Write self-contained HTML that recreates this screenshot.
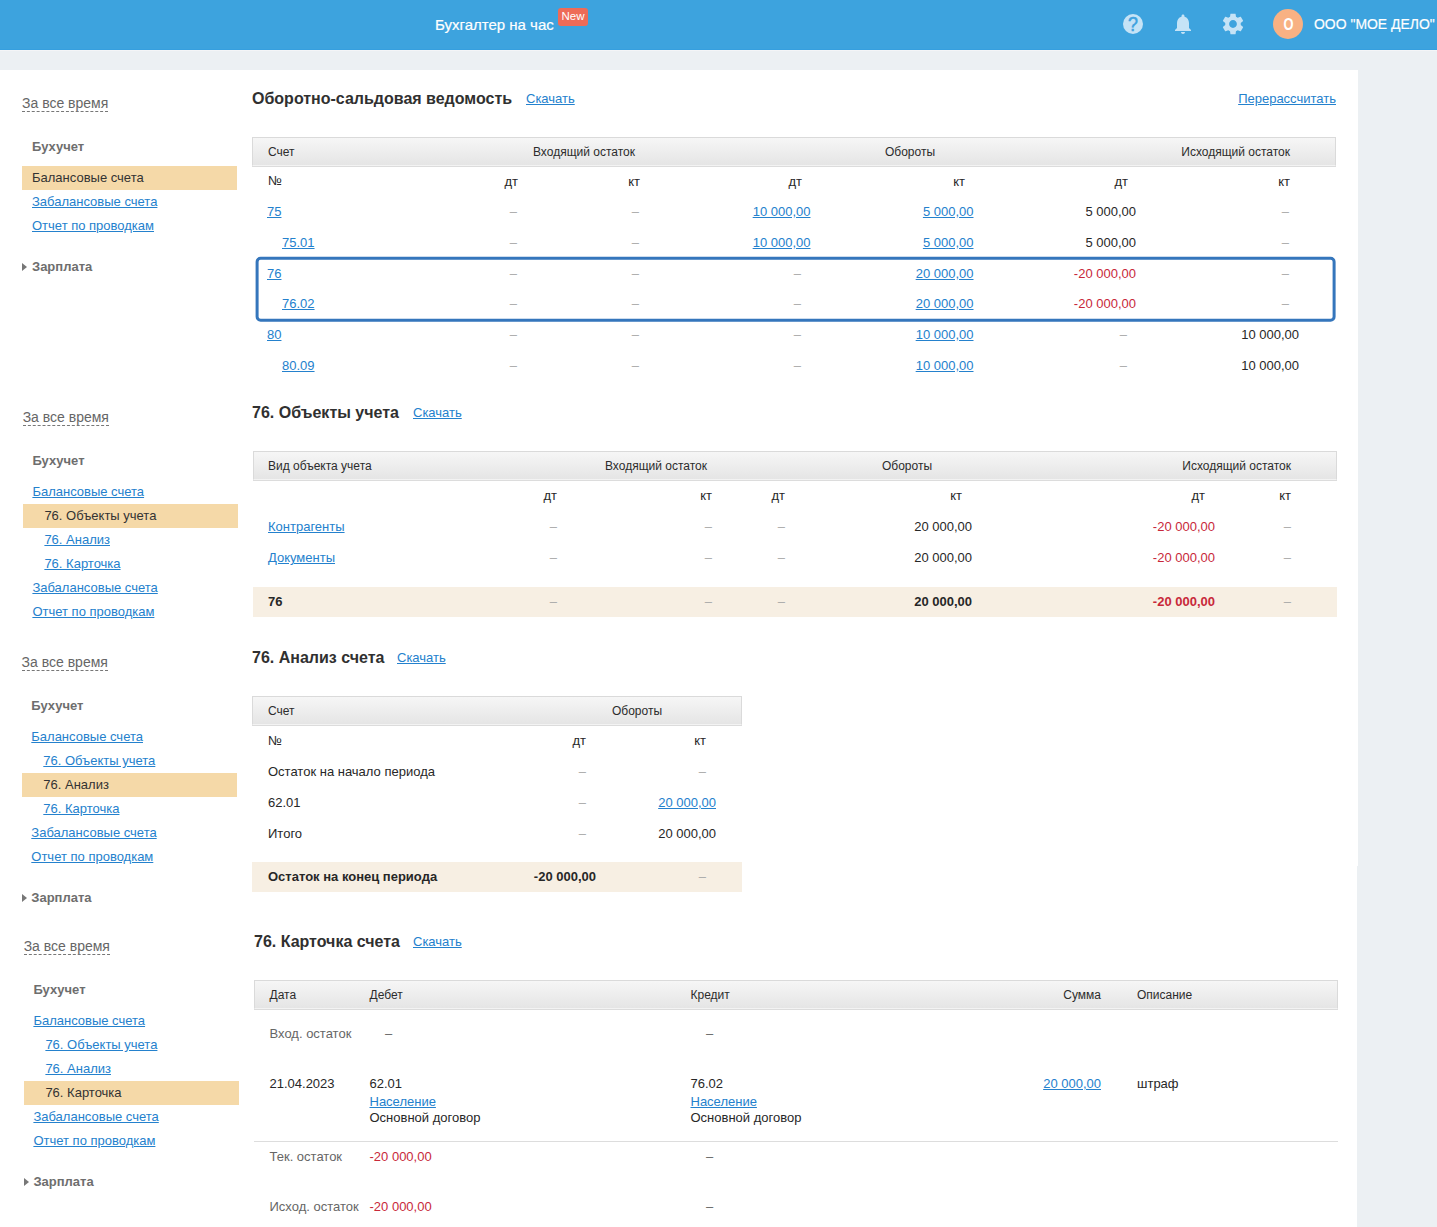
<!DOCTYPE html>
<html lang="ru"><head><meta charset="utf-8"><title>Оборотно-сальдовая ведомость</title><style>
html,body{margin:0;padding:0}
body{width:1437px;height:1227px;position:relative;overflow:hidden;background:#ecf0f3;font-family:"Liberation Sans",Arial,sans-serif;font-size:13px;color:#272727}
.b{position:absolute}
.t{position:absolute;white-space:nowrap;line-height:16px;height:16px}
.t.r{width:400px;text-align:right}
.t.c{width:400px;text-align:center}
a{color:#2481cd;text-decoration:underline}
.hdr{background:#3da3de}
.hd{color:#fff;font-size:15px;-webkit-text-stroke:0.2px #fff}
.new{position:absolute;background:#ee6b58;color:#fff;font-size:11.5px;line-height:16px;height:18px;width:30px;text-align:center;border-radius:3px}
.ava{position:absolute;width:30px;height:30px;border-radius:15px;background:#f8b183;color:#fff;font-weight:bold;font-size:16.5px;line-height:30px;text-align:center}
.per{font-size:14px;color:#666}
.dash{border-bottom:1px dashed #777;padding-bottom:0px}
.sh{font-weight:bold;color:#6e6e6e}
.act{color:#333}
.h1{font-weight:bold;font-size:16px;color:#303030}
.th{background:linear-gradient(#f6f6f6,#e5e5e5);border:1px solid #dadada;border-bottom-color:#f3f3f3;box-sizing:border-box;box-shadow:0 1px 0 #dcdcdc}
.thd{font-size:12px;color:#2c2c2c}
.ds{color:#aaa}
.red{color:#c8283a}
.gr{color:#666}
.bold{font-weight:bold}
.tri{position:absolute;width:0;height:0;border-left:5px solid #777;border-top:4px solid transparent;border-bottom:4px solid transparent}
</style></head><body>
<div class="b hdr" style="left:0px;top:0px;width:1437px;height:50px;"></div>
<div class="b " style="left:0px;top:49px;width:1437px;height:1px;background:#369fdf"></div>
<div class="b " style="left:0px;top:50px;width:1437px;height:1px;background:#f4f5f7"></div>
<div class="b " style="left:0px;top:70px;width:1358px;height:796px;background:#fff"></div>
<div class="b " style="left:0px;top:866px;width:1357px;height:361px;background:#fff"></div>
<div class="t hd" style="left:435px;top:17px;">Бухгалтер на час</div>
<div class="new" style="left:558px;top:8px;">New</div>
<svg class="b" style="left:1121px;top:12px" width="24" height="24" viewBox="0 0 24 24"><circle cx="12" cy="12" r="10" fill="#c5e3f6"/><text x="12" y="18.7" transform="translate(12 0) scale(.92 1) translate(-12 0)" text-anchor="middle" font-family="Liberation Sans, sans-serif" font-size="19.5" fill="#3ea2df" stroke="#3ea2df" stroke-width="0.5">?</text></svg>
<svg class="b" style="left:1171px;top:12px" width="24" height="24" viewBox="0 0 24 24"><path fill="#c5e3f6" d="M12 22c1.1 0 2-.9 2-2h-4c0 1.1.9 2 2 2zm6-6v-5c0-3.07-1.63-5.64-4.5-6.32V4c0-.83-.67-1.500-1.500-1.500s-1.500.67-1.500 1.500v.68C7.640 5.360 6 7.920 6 11v5l-2 2v1h16v-1l-2-2z"/></svg>
<svg class="b" style="left:1221px;top:12px" width="24" height="24" viewBox="0 0 24 24"><path transform="translate(12 12) scale(1.08) translate(-12 -12)" fill="#c5e3f6" d="M19.140 12.940c.04-.3.060-.61.060-.94 0-.32-.02-.64-.07-.94l2.030-1.580c.18-.14.230-.41.120-.61l-1.920-3.320c-.12-.22-.37-.29-.59-.22l-2.390.96c-.5-.38-1.030-.7-1.620-.94l-.36-2.540c-.04-.24-.24-.41-.48-.41h-3.840c-.24 0-.43.170-.47.410l-.36 2.540c-.59.240-1.130.57-1.620.94l-2.390-.96c-.22-.08-.47 0-.59.220L2.740 8.870c-.12.210-.08.470.12.610l2.030 1.580c-.05.3-.09.630-.09.940s.02.640.07.940l-2.030 1.580c-.18.140-.23.410-.12.610l1.920 3.320c.12.220.37.290.59.220l2.390-.96c.5.380 1.030.7 1.620.94l.36 2.540c.05.240.24.410.48.410h3.840c.24 0 .44-.17.470-.41l.36-2.540c.59-.24 1.130-.56 1.620-.94l2.390.96c.22.080.47 0 .59-.22l1.920-3.320c.12-.22.070-.47-.12-.61l-2.010-1.580zM12 15.600c-1.980 0-3.600-1.620-3.600-3.600s1.620-3.600 3.600-3.600 3.600 1.620 3.600 3.600-1.620 3.600-3.600 3.600z"/></svg>
<div class="ava" style="left:1273px;top:9px;"><span style="display:inline-block;transform:scaleX(.78)">О</span></div>
<div class="t hd" style="left:1314px;top:16px;font-size:15.5px"><span style="display:inline-block;transform:scaleX(.9);transform-origin:0 50%">ООО "МОЕ ДЕЛО"</span></div>
<div class="t per" style="left:22.0px;top:95px;"><span class="dash">За все время</span></div>
<div class="t sh" style="left:32px;top:139px;">Бухучет</div>
<div class="b " style="left:22px;top:166px;width:215px;height:24px;background:#f5d9a8"></div>
<div class="t act" style="left:32px;top:170px;">Балансовые счета</div>
<div class="t " style="left:32px;top:194px;"><a>Забалансовые счета</a></div>
<div class="t " style="left:32px;top:218px;"><a>Отчет по проводкам</a></div>
<div class="tri" style="left:22px;top:263px"></div>
<div class="t sh" style="left:32px;top:259px;">Зарплата</div>
<div class="t per" style="left:22.64px;top:409px;"><span class="dash">За все время</span></div>
<div class="t sh" style="left:32.4px;top:453px;">Бухучет</div>
<div class="t " style="left:32.4px;top:484px;"><a>Балансовые счета</a></div>
<div class="b " style="left:23px;top:504px;width:215px;height:24px;background:#f5d9a8"></div>
<div class="t act" style="left:44.4px;top:508px;">76. Объекты учета</div>
<div class="t " style="left:44.4px;top:532px;"><a>76. Анализ</a></div>
<div class="t " style="left:44.4px;top:556px;"><a>76. Карточка</a></div>
<div class="t " style="left:32.4px;top:580px;"><a>Забалансовые счета</a></div>
<div class="t " style="left:32.4px;top:604px;"><a>Отчет по проводкам</a></div>
<div class="t per" style="left:21.58px;top:654px;"><span class="dash">За все время</span></div>
<div class="t sh" style="left:31.3px;top:698px;">Бухучет</div>
<div class="t " style="left:31.3px;top:729px;"><a>Балансовые счета</a></div>
<div class="t " style="left:43.3px;top:753px;"><a>76. Объекты учета</a></div>
<div class="b " style="left:22px;top:773px;width:215px;height:24px;background:#f5d9a8"></div>
<div class="t act" style="left:43.3px;top:777px;">76. Анализ</div>
<div class="t " style="left:43.3px;top:801px;"><a>76. Карточка</a></div>
<div class="t " style="left:31.3px;top:825px;"><a>Забалансовые счета</a></div>
<div class="t " style="left:31.3px;top:849px;"><a>Отчет по проводкам</a></div>
<div class="tri" style="left:22px;top:894px"></div>
<div class="t sh" style="left:31.3px;top:890px;">Зарплата</div>
<div class="t per" style="left:23.64px;top:938px;"><span class="dash">За все время</span></div>
<div class="t sh" style="left:33.4px;top:982px;">Бухучет</div>
<div class="t " style="left:33.4px;top:1013px;"><a>Балансовые счета</a></div>
<div class="t " style="left:45.4px;top:1037px;"><a>76. Объекты учета</a></div>
<div class="t " style="left:45.4px;top:1061px;"><a>76. Анализ</a></div>
<div class="b " style="left:24px;top:1081px;width:215px;height:24px;background:#f5d9a8"></div>
<div class="t act" style="left:45.4px;top:1085px;">76. Карточка</div>
<div class="t " style="left:33.4px;top:1109px;"><a>Забалансовые счета</a></div>
<div class="t " style="left:33.4px;top:1133px;"><a>Отчет по проводкам</a></div>
<div class="tri" style="left:24px;top:1178px"></div>
<div class="t sh" style="left:33.4px;top:1174px;">Зарплата</div>
<div class="t h1" style="left:252px;top:91px;">Оборотно-сальдовая ведомость</div>
<div class="t " style="left:526px;top:91px;"><a>Скачать</a></div>
<div class="t r " style="left:936px;top:91px;"><a>Перерассчитать</a></div>
<div class="b th" style="left:252px;top:137px;width:1084px;height:29px;"></div>
<div class="t thd" style="left:268px;top:144px;">Счет</div>
<div class="t c thd" style="left:384px;top:144px;">Входящий остаток</div>
<div class="t c thd" style="left:710px;top:144px;">Обороты</div>
<div class="t r thd" style="left:890px;top:144px;">Исходящий остаток</div>
<div class="t " style="left:268px;top:173px;">№</div>
<div class="t r " style="left:118px;top:174px;">дт</div>
<div class="t r " style="left:240px;top:174px;">кт</div>
<div class="t r " style="left:402px;top:174px;">дт</div>
<div class="t r " style="left:565px;top:174px;">кт</div>
<div class="t r " style="left:728px;top:174px;">дт</div>
<div class="t r " style="left:890px;top:174px;">кт</div>
<div class="t " style="left:267px;top:204px;"><a>75</a></div>
<div class="t r ds" style="left:117px;top:204px;">–</div>
<div class="t r ds" style="left:239px;top:204px;">–</div>
<div class="t r " style="left:410.5px;top:204px;"><a>10 000,00</a></div>
<div class="t r " style="left:573.5px;top:204px;"><a>5 000,00</a></div>
<div class="t r " style="left:736px;top:204px;">5 000,00</div>
<div class="t r ds" style="left:889px;top:204px;">–</div>
<div class="t " style="left:282px;top:235px;"><a>75.01</a></div>
<div class="t r ds" style="left:117px;top:235px;">–</div>
<div class="t r ds" style="left:239px;top:235px;">–</div>
<div class="t r " style="left:410.5px;top:235px;"><a>10 000,00</a></div>
<div class="t r " style="left:573.5px;top:235px;"><a>5 000,00</a></div>
<div class="t r " style="left:736px;top:235px;">5 000,00</div>
<div class="t r ds" style="left:889px;top:235px;">–</div>
<div class="t " style="left:267px;top:266px;"><a>76</a></div>
<div class="t r ds" style="left:117px;top:266px;">–</div>
<div class="t r ds" style="left:239px;top:266px;">–</div>
<div class="t r ds" style="left:401px;top:266px;">–</div>
<div class="t r " style="left:573.5px;top:266px;"><a>20 000,00</a></div>
<div class="t r " style="left:736px;top:266px;"><span class="red">-20 000,00</span></div>
<div class="t r ds" style="left:889px;top:266px;">–</div>
<div class="t " style="left:282px;top:296px;"><a>76.02</a></div>
<div class="t r ds" style="left:117px;top:296px;">–</div>
<div class="t r ds" style="left:239px;top:296px;">–</div>
<div class="t r ds" style="left:401px;top:296px;">–</div>
<div class="t r " style="left:573.5px;top:296px;"><a>20 000,00</a></div>
<div class="t r " style="left:736px;top:296px;"><span class="red">-20 000,00</span></div>
<div class="t r ds" style="left:889px;top:296px;">–</div>
<div class="t " style="left:267px;top:327px;"><a>80</a></div>
<div class="t r ds" style="left:117px;top:327px;">–</div>
<div class="t r ds" style="left:239px;top:327px;">–</div>
<div class="t r ds" style="left:401px;top:327px;">–</div>
<div class="t r " style="left:573.5px;top:327px;"><a>10 000,00</a></div>
<div class="t r ds" style="left:727px;top:327px;">–</div>
<div class="t r " style="left:899px;top:327px;">10 000,00</div>
<div class="t " style="left:282px;top:358px;"><a>80.09</a></div>
<div class="t r ds" style="left:117px;top:358px;">–</div>
<div class="t r ds" style="left:239px;top:358px;">–</div>
<div class="t r ds" style="left:401px;top:358px;">–</div>
<div class="t r " style="left:573.5px;top:358px;"><a>10 000,00</a></div>
<div class="t r ds" style="left:727px;top:358px;">–</div>
<div class="t r " style="left:899px;top:358px;">10 000,00</div>
<svg class="b" style="left:250px;top:250px" width="1100" height="80" viewBox="0 0 1100 80"><rect x="7.1" y="8.2" width="1077" height="62.1" rx="3.5" ry="3.5" fill="none" stroke="#3576bc" stroke-width="3"/></svg>
<div class="t h1" style="left:252px;top:405px;">76. Объекты учета</div>
<div class="t " style="left:413px;top:405px;"><a>Скачать</a></div>
<div class="b th" style="left:253px;top:451px;width:1084px;height:29px;"></div>
<div class="t thd" style="left:268px;top:458px;">Вид объекта учета</div>
<div class="t c thd" style="left:456px;top:458px;">Входящий остаток</div>
<div class="t c thd" style="left:707px;top:458px;">Обороты</div>
<div class="t r thd" style="left:891px;top:458px;">Исходящий остаток</div>
<div class="t r " style="left:157px;top:488px;">дт</div>
<div class="t r " style="left:312px;top:488px;">кт</div>
<div class="t r " style="left:385px;top:488px;">дт</div>
<div class="t r " style="left:562px;top:488px;">кт</div>
<div class="t r " style="left:805px;top:488px;">дт</div>
<div class="t r " style="left:891px;top:488px;">кт</div>
<div class="b " style="left:253px;top:587px;width:1084px;height:30px;background:#f7efe3"></div>
<div class="t " style="left:268px;top:519px;"><a>Контрагенты</a></div>
<div class="t r ds" style="left:157px;top:519px;">–</div>
<div class="t r ds" style="left:312px;top:519px;">–</div>
<div class="t r ds" style="left:385px;top:519px;">–</div>
<div class="t r " style="left:572px;top:519px;">20 000,00</div>
<div class="t r " style="left:815px;top:519px;"><span class="red">-20 000,00</span></div>
<div class="t r ds" style="left:891px;top:519px;">–</div>
<div class="t " style="left:268px;top:550px;"><a>Документы</a></div>
<div class="t r ds" style="left:157px;top:550px;">–</div>
<div class="t r ds" style="left:312px;top:550px;">–</div>
<div class="t r ds" style="left:385px;top:550px;">–</div>
<div class="t r " style="left:572px;top:550px;">20 000,00</div>
<div class="t r " style="left:815px;top:550px;"><span class="red">-20 000,00</span></div>
<div class="t r ds" style="left:891px;top:550px;">–</div>
<div class="t bold" style="left:268px;top:594px;">76</div>
<div class="t r ds" style="left:157px;top:594px;">–</div>
<div class="t r ds" style="left:312px;top:594px;">–</div>
<div class="t r ds" style="left:385px;top:594px;">–</div>
<div class="t r bold" style="left:572px;top:594px;">20 000,00</div>
<div class="t r bold" style="left:815px;top:594px;"><span class="red">-20 000,00</span></div>
<div class="t r ds" style="left:891px;top:594px;">–</div>
<div class="t h1" style="left:252px;top:650px;">76. Анализ счета</div>
<div class="t " style="left:397px;top:650px;"><a>Скачать</a></div>
<div class="b th" style="left:252px;top:696px;width:490px;height:29px;"></div>
<div class="t thd" style="left:268px;top:703px;">Счет</div>
<div class="t c thd" style="left:437px;top:703px;">Обороты</div>
<div class="t " style="left:268px;top:733px;">№</div>
<div class="t r " style="left:186px;top:733px;">дт</div>
<div class="t r " style="left:306px;top:733px;">кт</div>
<div class="t " style="left:268px;top:764px;">Остаток на начало периода</div>
<div class="t r ds" style="left:186px;top:764px;">–</div>
<div class="t r ds" style="left:306px;top:764px;">–</div>
<div class="t " style="left:268px;top:795px;">62.01</div>
<div class="t r ds" style="left:186px;top:795px;">–</div>
<div class="t r " style="left:316px;top:795px;"><a>20 000,00</a></div>
<div class="t " style="left:268px;top:826px;">Итого</div>
<div class="t r ds" style="left:186px;top:826px;">–</div>
<div class="t r " style="left:316px;top:826px;">20 000,00</div>
<div class="b " style="left:252px;top:862px;width:490px;height:30px;background:#f7efe3"></div>
<div class="t bold" style="left:268px;top:869px;">Остаток на конец периода</div>
<div class="t r bold" style="left:196px;top:869px;">-20 000,00</div>
<div class="t r ds" style="left:306px;top:869px;">–</div>
<div class="t h1" style="left:254px;top:934px;">76. Карточка счета</div>
<div class="t " style="left:413px;top:934px;"><a>Скачать</a></div>
<div class="b th" style="left:254px;top:980px;width:1084px;height:29px;"></div>
<div class="t thd" style="left:269.5px;top:987px;">Дата</div>
<div class="t thd" style="left:369.5px;top:987px;">Дебет</div>
<div class="t thd" style="left:690.5px;top:987px;">Кредит</div>
<div class="t r thd" style="left:701px;top:987px;">Сумма</div>
<div class="t thd" style="left:1137px;top:987px;">Описание</div>
<div class="t gr" style="left:269.5px;top:1026px;">Вход. остаток</div>
<div class="t gr" style="left:385px;top:1026px;">–</div>
<div class="t gr" style="left:706px;top:1026px;">–</div>
<div class="t " style="left:269.5px;top:1076px;">21.04.2023</div>
<div class="t " style="left:369.5px;top:1076px;">62.01</div>
<div class="t " style="left:369.5px;top:1094px;"><a>Население</a></div>
<div class="t " style="left:369.5px;top:1110px;">Основной договор</div>
<div class="t " style="left:690.5px;top:1076px;">76.02</div>
<div class="t " style="left:690.5px;top:1094px;"><a>Население</a></div>
<div class="t " style="left:690.5px;top:1110px;">Основной договор</div>
<div class="t r " style="left:701px;top:1076px;"><a>20 000,00</a></div>
<div class="t " style="left:1137px;top:1076px;">штраф</div>
<div class="b " style="left:254px;top:1141px;width:1084px;height:1px;background:#ddd"></div>
<div class="t gr" style="left:269.5px;top:1149px;">Тек. остаток</div>
<div class="t red" style="left:369.5px;top:1149px;">-20 000,00</div>
<div class="t gr" style="left:706px;top:1149px;">–</div>
<div class="t gr" style="left:269.5px;top:1199px;">Исход. остаток</div>
<div class="t red" style="left:369.5px;top:1199px;">-20 000,00</div>
<div class="t gr" style="left:706px;top:1199px;">–</div>
</body></html>
